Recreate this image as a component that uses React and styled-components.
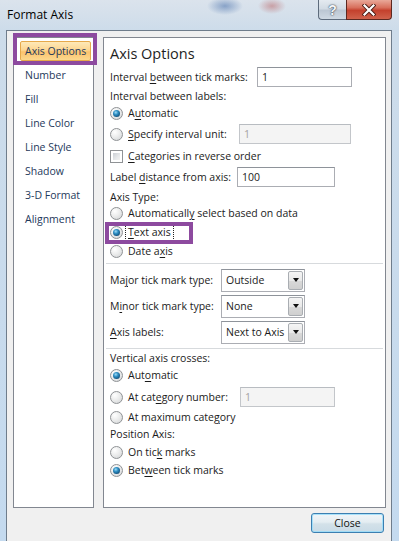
import React from "react";
import styled, { createGlobalStyle } from "styled-components";

const GlobalStyle = createGlobalStyle`
  html, body {
    margin: 0;
    padding: 0;
    background: #fff;
  }
  body {
    font-family: "Open Sans", "Liberation Sans", sans-serif;
    font-size: 10.5px;
    color: #1b1b1b;
  }
`;

const Window = styled.div`
  width: 399px;
  height: 541px;
  display: flex;
  flex-direction: column;
  overflow: hidden;
  background:
    radial-gradient(ellipse 18px 9px at 225px 6px, rgba(70, 110, 170, 0.55), transparent),
    radial-gradient(ellipse 14px 8px at 272px 6px, rgba(180, 80, 80, 0.45), transparent),
    radial-gradient(ellipse 10px 7px at 330px 6px, rgba(170, 110, 110, 0.35), transparent),
    linear-gradient(to bottom, #dbe3ec 0, #cddcea 30px, #c4daef 100%);
`;

const TitleBar = styled.div`
  height: 30px;
  flex-shrink: 0;
  display: flex;
  justify-content: space-between;
  align-items: flex-start;
  padding: 0 7px 0 7px;
`;

const Title = styled.div`
  line-height: 30px;
  font-size: 12px;
  color: #000;
`;

const CaptionButtons = styled.div`
  display: flex;
  height: 20px;
`;

const HelpButton = styled.div`
  width: 28px;
  height: 20px;
  box-sizing: border-box;
  border: 1px solid #5d6b7c;
  border-top: none;
  border-right: none;
  border-radius: 0 0 0 4px;
  background: linear-gradient(to bottom, #e4eaf0 0%, #d2dbe4 45%, #bcc7d3 55%, #cfd9e3 100%);
  display: flex;
  align-items: center;
  justify-content: center;
  color: #f4f6f8;
  font: bold 14px "Liberation Sans", sans-serif;
  text-shadow: 0 0 2px #3a4350, 0 0 1px #3a4350;
`;

const CloseButton = styled.div`
  width: 46px;
  height: 20px;
  box-sizing: border-box;
  border: 1px solid #5c2820;
  border-top: none;
  border-radius: 0 0 4px 0;
  background: linear-gradient(to bottom, #e9a899 0%, #d86f5c 40%, #c4412d 55%, #d0624c 100%);
  display: flex;
  align-items: center;
  justify-content: center;
`;

const Client = styled.div`
  flex: 1;
  display: flex;
  flex-direction: column;
  margin: 0 7px 0 6px;
  border: 1px solid #6f7d8c;
  border-bottom: none;
  background: #f0f0f0;
  padding: 6px 5px 0 6px;
`;

const Body = styled.div`
  display: flex;
  gap: 9px;
  height: 471px;
`;

const Nav = styled.div`
  position: relative;
  width: 81px;
  box-sizing: border-box;
  border: 1px solid #828790;
  background: #fff;
  padding: 3px 2px 0 6px;
`;

const NavItem = styled.div`
  height: 20px;
  margin-bottom: 4px;
  box-sizing: border-box;
  padding-left: 4px;
  line-height: 18px;
  color: #1e395b;
  border: 1px solid ${(p) => (p.$active ? "#e6a94b" : "transparent")};
  border-radius: 2px;
  background: ${(p) =>
    p.$active ? "linear-gradient(to bottom, #fee9b8 0%, #fdd691 45%, #fbc36c 55%, #fcd88e 100%)" : "none"};
  white-space: nowrap;
`;

const Mark = styled.div`
  position: absolute;
  border: 4px solid #8d4a9f;
  pointer-events: none;
  left: ${(p) => p.$x}px;
  top: ${(p) => p.$y}px;
  width: ${(p) => p.$w}px;
  height: ${(p) => p.$h}px;
  box-sizing: border-box;
`;

const Content = styled.div`
  width: 283px;
  box-sizing: border-box;
  border: 1px solid #828790;
  background: #fff;
  padding: 0 2px 0 6px;
`;

const Heading = styled.div`
  height: 29px;
  box-sizing: border-box;
  padding-top: 6px;
  font-size: 14.5px;
  line-height: 20px;
  color: #1e1e1e;
`;

const Row = styled.div`
  position: relative;
  display: flex;
  align-items: center;
  height: ${(p) => p.$h}px;
  white-space: nowrap;
`;

const Label = styled.span`
  flex-shrink: 0;
  width: ${(p) => (p.$w ? `${p.$w}px` : "auto")};
`;

const Key = styled.span`
  text-decoration: underline;
  text-underline-offset: 2px;
`;

const Focus = styled.span`
  outline: 1px dotted #222;
  outline-offset: 1px;
  padding: 0 1px;
  margin-left: -1px;
`;

const Radio = styled.span`
  flex-shrink: 0;
  width: 13px;
  height: 13px;
  box-sizing: border-box;
  margin-right: 5px;
  border-radius: 50%;
  border: 1px solid #8f9295;
  background: radial-gradient(circle at 35% 30%, #ffffff 0%, #eceded 45%, #cfd1d3 100%);
  display: flex;
  align-items: center;
  justify-content: center;
  &::after {
    content: "";
    display: ${(p) => (p.$checked ? "block" : "none")};
    width: 7px;
    height: 7px;
    border-radius: 50%;
    background: radial-gradient(circle at 40% 35%, #9fdcf6 0%, #2f8fc4 35%, #0e4a74 80%, #0a3656 100%);
  }
`;

const Check = styled.span`
  flex-shrink: 0;
  width: 13px;
  height: 13px;
  box-sizing: border-box;
  margin-right: 5px;
  border: 1px solid #8f9295;
  background: #fff;
  padding: 2px;
  &::after {
    content: "";
    display: block;
    width: 100%;
    height: 100%;
    background: linear-gradient(135deg, #cbcfd5 0%, #e6e8ea 60%, #f2f2f2 100%);
  }
`;

const TextBox = styled.div`
  width: ${(p) => p.$w}px;
  height: 20px;
  box-sizing: border-box;
  border: 1px solid ${(p) => (p.$disabled ? "#c3c6ca" : "#abadb3")};
  border-top-color: ${(p) => (p.$disabled ? "#b8bcc1" : "#8e939a")};
  background: ${(p) => (p.$disabled ? "#f4f4f4" : "#fff")};
  color: ${(p) => (p.$disabled ? "#a3a3a3" : "#1b1b1b")};
  padding-left: 4px;
  display: flex;
  align-items: center;
`;

const Select = styled.div`
  width: 84px;
  height: 23px;
  box-sizing: border-box;
  border: 1px solid #abadb3;
  border-top-color: #8e939a;
  background: #fff;
  display: flex;
  align-items: stretch;
`;

const SelectText = styled.span`
  flex: 1;
  padding-left: 4px;
  display: flex;
  align-items: center;
`;

const SelectArrow = styled.span`
  width: 15px;
  margin: 1px;
  box-sizing: border-box;
  border: 1px solid #a9adb2;
  border-radius: 2px;
  background: linear-gradient(to bottom, #f5f5f5 0%, #e9e9e9 50%, #d9d9d9 51%, #cfcfcf 100%);
  display: flex;
  align-items: center;
  justify-content: center;
  &::after {
    content: "";
    border-left: 3.5px solid transparent;
    border-right: 3.5px solid transparent;
    border-top: 4px solid #111;
  }
`;

const Separator = styled.div`
  height: ${(p) => p.$h}px;
  margin-left: -4px;
  display: flex;
  align-items: center;
  &::after {
    content: "";
    flex: 1;
    height: 1px;
    background: #d7dadd;
  }
`;

const Footer = styled.div`
  display: flex;
  justify-content: flex-end;
  padding: 5px 2px 0 0;
`;

const Button = styled.div`
  width: 73px;
  height: 20px;
  box-sizing: border-box;
  border: 1px solid #3c7fb1;
  border-radius: 3px;
  background: linear-gradient(to bottom, #f0f5f8 0%, #e4edf2 45%, #d3e1e9 55%, #c9dbe6 100%);
  box-shadow: inset 0 0 0 1px rgba(150, 220, 250, 0.8);
  display: flex;
  align-items: center;
  justify-content: center;
  color: #111;
`;

const navItems = ["Axis Options", "Number", "Fill", "Line Color", "Line Style", "Shadow", "3-D Format", "Alignment"];

function Dropdown({ value }) {
  return (
    <Select>
      <SelectText>{value}</SelectText>
      <SelectArrow />
    </Select>
  );
}

export default function App() {
  return (
    <>
      <GlobalStyle />
      <Window>
        <TitleBar>
          <Title>Format Axis</Title>
          <CaptionButtons>
            <HelpButton>?</HelpButton>
            <CloseButton>
              <svg width="14" height="12" viewBox="0 0 14 12">
                <path d="M2.5 1.5 L11.5 10.5 M11.5 1.5 L2.5 10.5" stroke="#4a1c14" strokeWidth="4" strokeLinecap="square" />
                <path d="M2.5 1.5 L11.5 10.5 M11.5 1.5 L2.5 10.5" stroke="#fff" strokeWidth="2.2" strokeLinecap="square" />
              </svg>
            </CloseButton>
          </CaptionButtons>
        </TitleBar>

        <Client>
          <Body>
            <Nav>
              {navItems.map((item, index) => (
                <NavItem key={item} $active={index === 0}>
                  {item}
                </NavItem>
              ))}
              <Mark $x={-1} $y={-5} $w={84} $h={32} />
            </Nav>

            <Content>
              <Heading>Axis Options</Heading>
              <Row $h={20}>
                <Label $w={147}>
                  Interval <Key>b</Key>etween tick marks:
                </Label>
                <TextBox $w={95}>1</TextBox>
              </Row>
              <Row $h={18}>Interval between labels:</Row>
              <Row $h={16}>
                <Radio $checked />
                <span>
                  A<Key>u</Key>tomatic
                </span>
              </Row>
              <Row $h={26}>
                <Radio />
                <Label $w={111}>
                  <Key>S</Key>pecify interval unit:
                </Label>
                <TextBox $w={112} $disabled>
                  1
                </TextBox>
              </Row>
              <Row $h={18}>
                <Check />
                <span>
                  <Key>C</Key>ategories in reverse order
                </span>
              </Row>
              <Row $h={24}>
                <Label $w={127}>
                  Label <Key>d</Key>istance from axis:
                </Label>
                <TextBox $w={98}>100</TextBox>
              </Row>
              <Row $h={16}>Axis Type:</Row>
              <Row $h={16}>
                <Radio />
                <span>
                  Automaticall<Key>y</Key> select based on data
                </span>
              </Row>
              <Row $h={22}>
                <Radio $checked />
                <Focus>
                  <Key>T</Key>ext axis
                </Focus>
                <Mark $x={-5} $y={1} $w={88} $h={22} />
              </Row>
              <Row $h={16}>
                <Radio />
                <span>
                  Date a<Key>x</Key>is
                </span>
              </Row>
              <Separator $h={8} />
              <Row $h={26}>
                <Label $w={111}>
                  Ma<Key>j</Key>or tick mark type:
                </Label>
                <Dropdown value="Outside" />
              </Row>
              <Row $h={26}>
                <Label $w={111}>
                  M<Key>i</Key>nor tick mark type:
                </Label>
                <Dropdown value="None" />
              </Row>
              <Row $h={26}>
                <Label $w={111}>
                  <Key>A</Key>xis labels:
                </Label>
                <Dropdown value="Next to Axis" />
              </Row>
              <Separator $h={6} />
              <Row $h={14}>Vertical axis crosses:</Row>
              <Row $h={20}>
                <Radio $checked />
                <span>
                  Aut<Key>o</Key>matic
                </span>
              </Row>
              <Row $h={24}>
                <Radio />
                <Label $w={112}>
                  At cat<Key>e</Key>gory number:
                </Label>
                <TextBox $w={95} $disabled>
                  1
                </TextBox>
              </Row>
              <Row $h={16}>
                <Radio />
                <span>
                  At maximum cate<Key>g</Key>ory
                </span>
              </Row>
              <Row $h={18}>Position Axis:</Row>
              <Row $h={18}>
                <Radio />
                <span>
                  On tic<Key>k</Key> marks
                </span>
              </Row>
              <Row $h={18}>
                <Radio $checked />
                <span>
                  Bet<Key>w</Key>een tick marks
                </span>
              </Row>
            </Content>
          </Body>
          <Footer>
            <Button>Close</Button>
          </Footer>
        </Client>
      </Window>
    </>
  );
}
